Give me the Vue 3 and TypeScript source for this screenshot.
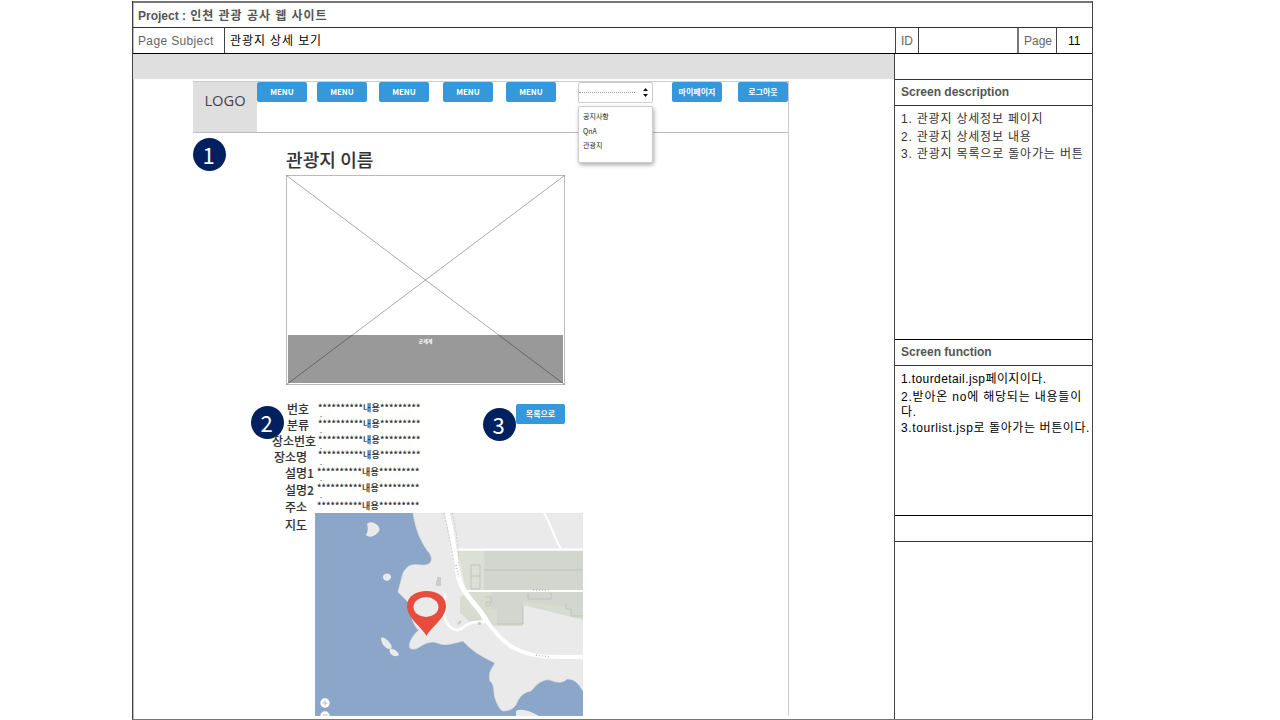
<script setup lang="ts">
interface NavButton { label: string; gap: number; width: number }
interface Field { label: string; indent: number; top: number; shift: number; valueTop: number }
interface Note { text: string; spacing: number }

const nav: NavButton[] = [
  { label: 'MENU', gap: 0, width: 50 },
  { label: 'MENU', gap: 10, width: 50 },
  { label: 'MENU', gap: 12, width: 50 },
  { label: 'MENU', gap: 14, width: 50 },
  { label: 'MENU', gap: 13, width: 50 },
]
const options: string[] = ['공지사항', 'QnA', '관광지']
const fields: Field[] = [
  { label: '번호', indent: 15, top: 0, shift: 1, valueTop: 0 },
  { label: '분류', indent: 15, top: 16, shift: 1, valueTop: 16 },
  { label: '장소번호', indent: 0, top: 32, shift: 1, valueTop: 32 },
  { label: '장소명', indent: 2, top: 48, shift: 1, valueTop: 47 },
  { label: '설명1', indent: 13, top: 64, shift: 0, valueTop: 64 },
  { label: '설명2', indent: 13, top: 81, shift: 0, valueTop: 80 },
  { label: '주소', indent: 13, top: 98, shift: 0, valueTop: 98 },
  { label: '지도', indent: 13, top: 116, shift: 0, valueTop: 0 },
]
const descriptions: Note[] = [
  { text: '1. 관광지 상세정보 페이지', spacing: 0.8 },
  { text: '2. 관광지 상세정보 내용', spacing: 0.8 },
  { text: '3. 관광지 목록으로 돌아가는 버튼', spacing: 0.83 },
]
const functions: Note[] = [
  { text: '1.tourdetail.jsp페이지이다.', spacing: 0.4 },
  { text: '2.받아온 no에 해당되는 내용들이다.', spacing: 0.8 },
  { text: '3.tourlist.jsp로 돌아가는 버튼이다.', spacing: 0.6 },
]
</script>

<template>
  <main class="sheet">
    <header class="project"><b>Project : <span class="title">인쳔 관광 공사 웹 사이트</span></b></header>
    <div class="subject-row">
      <div class="cell subject"><span>Page Subject</span></div>
      <div class="cell name"><span>관광지 상세 보기</span></div>
      <div class="cell id"><span>ID</span></div>
      <div class="cell blank"></div>
      <div class="cell page"><span>Page</span></div>
      <div class="cell number"><span>11</span></div>
    </div>
    <div class="body">
      <section class="preview">
        <div class="band"></div>
        <div class="wire">
          <div class="topbar">
            <div class="logo">LOGO</div>
            <div v-for="(item, i) in nav" :key="i" class="btn" :style="{ marginLeft: item.gap + 'px', width: item.width + 'px' }">{{ item.label }}</div>
            <div class="select">
              <span class="dash"></span>
              <svg width="5" height="9" viewBox="0 0 5 9"><path d="M0 3L2.5 0L5 3ZM0 6H5L2.5 9Z" fill="#111" /></svg>
              <ul class="menu">
                <li v-for="option in options" :key="option">{{ option }}</li>
              </ul>
            </div>
            <div class="btn mypage">마이페이지</div>
            <div class="btn logout">로그아웃</div>
          </div>
          <div class="badge one">1</div>
          <div class="badge two">2</div>
          <div class="badge three">3</div>
          <h1>관광지 이름</h1>
          <div class="photo">
            <div class="caption">군세계</div>
            <svg class="cross" width="279" height="210" viewBox="0 0 279 210"><path d="M.5 .5L278.5 209.5M278.5 .5L.5 209.5" stroke="#000" stroke-opacity=".34" fill="none" /></svg>
          </div>
          <div class="details">
            <div class="fields">
              <div v-for="(field, i) in fields" :key="field.label" class="field" :style="{ top: field.top + 'px' }">
                <span class="label" :style="{ left: field.indent + 'px' }">{{ field.label }}</span>
                <span v-if="i < 7" class="value" :style="{ left: 45 + field.shift + 'px', top: field.valueTop - field.top + 'px' }">**********내용*********</span>
                <i v-if="i < 6" class="tick"></i>
              </div>
            </div>
            <div class="btn list">목록으로</div>
          </div>
          <svg class="map" width="268" height="203" viewBox="0 0 268 203">
            <rect width="268" height="203" fill="#8ca6ca" />
            <path d="M98 0C101 19 107 31 115 41C119 49 114 53 106 52C95 51 93 52 88 60L83 79L93 89Q98 115 104 117C95 124 91 137 98 136C104 137 107 129 119 129Q128 133 136 131L148 128Q158 140 180 150C176 157 173 160 175 168C180 172 178 178 180 185Q184 197 188 198Q200 198 203 187Q208 179 216 178Q226 165 235 167Q246 172 252 166Q261 165 268 178V0Z" fill="#eaeaea" stroke="#dedfdb" stroke-width=".7" />
            <path d="M52 11C56 6 67 13 64 18C62 22 55 26 51 22Q54 17 52 11ZM68 63C70 59 77 60 76 65C73 70 67 68 68 63ZM66 125C69 122 81 134 75 136C70 136 66 130 66 125ZM75 136C78 134 88 142 82 143C77 144 73 139 75 136ZM201 203V198Q208 194 224 203Z" fill="#eaeaea" />
            <path d="M143 38H268V78H151Z" fill="#dcdfd6" /><path d="M145 84L154 79H174L165 109H155L145 100ZM153 79H268V107L208 92V113H175Z" fill="#d8dcd0" />
            <path d="M169 38H268V77H169ZM176 79H268V103L256 102V95L208 88V111H182V96H176Z" fill="#d2d6ce" />
            <path d="M208 93L268 107V144H208Z" fill="#eaeaea" />
            <path d="M169 57H268M156 52H165V76H156ZM156 63H165M170 84H176V90M171 89H175V93H171ZM213 80V86H236V80M251 91V96H256V103H268M182 111H208V92" fill="none" stroke="#b9c0b3" stroke-width=".8" />
            <path d="M141 36.500H268M148 78H268M229 0C236 12 240 26 246 36" fill="none" stroke="#fff" stroke-width="2" />
            <path d="M132 0C139 23 139 48 145 69C150 84 163 92 171 107" fill="none" stroke="#fff" stroke-width="5" />
            <path d="M170 105C187 132 205 144 240 144H268" fill="none" stroke="#fff" stroke-width="4" />
            <path d="M130 80V96C127 108 137 120 146 116C154 109 160 108 171 109" fill="none" stroke="#fff" stroke-width="2.5" />
            <path d="M129 0Q136 30 140 56M137 0Q143 21 144 53" fill="none" stroke="#bbb" stroke-width=".7" stroke-dasharray="2 1.5" />
            <path d="M141 52L144 64M218 77H236M221 142L235 144" fill="none" stroke="#bbb" stroke-width="1.5" stroke-dasharray="1 2" />
            <path d="M122 64H126V73H121V68H122ZM142 110L146 107V110L143 112ZM163 109H166V112H163Z" fill="#ccc" />
            <path d="M111.500 123C107 114 92 105 92 93C92 73 131 73 131 93C131 105 116 114 111.500 123Z" fill="#e74c3c" />
            <ellipse cx="111" cy="94" rx="12.500" ry="10" fill="#eaeaea" />
            <circle cx="10" cy="190" r="4.700" fill="#fff" /><circle cx="10" cy="203" r="4.700" fill="#fff" />
            <path d="M7.500 190H12.500M10 187.500V192.500M7.500 202H12.500" stroke="#aebdd5" fill="none" />
          </svg>
        </div>
      </section>
      <aside class="notes">
        <div class="strip"></div>
        <h2 class="strip">Screen description</h2>
        <div class="text description"><p v-for="line in descriptions" :key="line.text" :style="{ letterSpacing: line.spacing + 'px' }">{{ line.text }}</p></div>
        <h2 class="strip">Screen function</h2>
        <div class="text function"><p v-for="line in functions" :key="line.text" :style="{ letterSpacing: line.spacing + 'px' }">{{ line.text }}</p></div>
        <div class="strip"></div>
      </aside>
    </div>
  </main>
</template>

<style>
body { background: #fff; overflow: hidden; }
</style>
<style scoped>
* { box-sizing: border-box; margin: 0; padding: 0; }
.sheet { width: 961px; height: 719px; margin: 1px 0 0 132px; border-left: 1px solid #444; border-right: 1px solid #444; border-bottom: 1px solid #777; box-shadow: inset 1px 0 #bbb; font-family: "Liberation Sans", "Noto Sans CJK KR", sans-serif; color: #222; }
.project { height: 27px; border-top: 2px solid #777; border-bottom: 1px solid #333; padding-left: 5px; line-height: 26px; font-size: 12px; color: #555; white-space: nowrap; }
.title { margin-left: 1px; letter-spacing: .95px; }
.subject-row { display: flex; height: 26px; border-bottom: 1px solid #000; font-size: 12px; line-height: 26px; color: #666; white-space: nowrap; }
.cell { border-right: 1px solid #444; padding-left: 5px; }
.subject { width: 92px; letter-spacing: .36px; }
.name { width: 671px; color: #000; letter-spacing: .9px; }
.id { width: 23px; }
.blank { width: 100px; border-right: 2px solid #777; }
.page { width: 38px; }
.number { border: 0; color: #000; padding-left: 11px; }
.body { display: flex; height: 665px; }
.preview { width: 761px; }
.band { height: 25px; background: #dfdfdf; }
.wire { position: relative; width: 596px; height: 635px; margin: 2px 0 0 60px; border-top: 1px solid #ccc; border-right: 1px solid #ccc; font-family: "Noto Sans CJK KR", sans-serif; }
.topbar { display: flex; height: 51px; border-bottom: 1px solid #bbb; }
.logo { width: 64px; height: 50px; background: #dfdfdf; color: #444; font: 14.700px/37px "Open Sans", sans-serif; text-align: center; }
.btn { flex: none; height: 20px; border-radius: 2px; background: #3498db; color: #fff; font-weight: 700; font-size: 8px; line-height: 19px; text-align: center; }
.select { position: relative; display: flex; align-items: center; justify-content: space-between; width: 75px; height: 21px; margin-left: 22px; padding-right: 4px; border: 1px solid #ccc; border-radius: 2px; background: #fff; }
.dash { width: 56px; border-top: 1px dotted #999; }
.menu { position: absolute; top: 23px; left: -1px; width: 75px; height: 57px; padding: 2px 4px; border: 1px solid #ccc; border-radius: 2px; background: #fff; box-shadow: 1px 2px 4px #0005; list-style: none; font-size: 7px; line-height: 14.500px; }
.mypage { width: 50px; margin-left: 19px; }
.logout { width: 50px; margin-left: 16px; }
.badge { position: absolute; width: 33px; height: 33px; padding-right: 2px; border-radius: 50%; background: #002060; color: #fff; font-size: 22px; line-height: 32px; text-align: center; }
.one { left: 0; top: 56px; }
.two { left: 58px; top: 324px; }
.three { left: 290px; top: 326px; }
h1 { height: 42px; padding: 13px 0 0 93px; font-weight: 500; font-size: 18px; line-height: 26px; letter-spacing: .1px; color: #333; -webkit-text-stroke: .1px #333; }
.photo { position: relative; display: flex; align-items: flex-end; width: 279px; height: 210px; margin-left: 93px; padding: 1px; border: 1px solid #bbb; }
.caption { width: 100%; height: 48px; background: #999; color: #fff; font-size: 5px; font-weight: 700; line-height: 11px; text-align: center; }
.cross { position: absolute; left: -1px; top: -1px; }
.details { display: flex; align-items: flex-start; height: 128px; margin-left: 79px; padding-top: 18px; }
.fields { position: relative; width: 244px; }
.field { position: absolute; left: 0; white-space: nowrap; }
.label { position: absolute; top: -3px; font-size: 12px; line-height: 18px; font-weight: 500; color: #333; -webkit-text-stroke: .1px #333; }
.value { position: absolute; font-size: 9px; line-height: 10px; letter-spacing: .15px; font-weight: 500; color: #333; -webkit-text-stroke: .1px #333; }
.tick { position: absolute; left: 48px; top: 13px; width: 2px; height: 1px; background: #aaa; }
.list { width: 49px; margin-top: 1px; }
.map { display: block; margin-left: 121.500px; }
.notes { flex: 1; border-left: 1px solid #444; }
.strip { height: 26px; border-bottom: 1px solid #333; padding-left: 6px; font-size: 12px; line-height: 25px; color: #555; white-space: nowrap; }
.text { font-size: 12px; }
.description { height: 234px; padding: 5px 0 0 6px; line-height: 17.500px; border-bottom: 1px solid #000; color: #333; white-space: nowrap; }
.function { height: 150px; padding: 6px 0 0 6px; line-height: 15.500px; border-bottom: 1px solid #000; color: #000; word-break: break-all; }
.function p:first-child { margin-bottom: 2px; }
.function p:last-child { white-space: nowrap; }
</style>
